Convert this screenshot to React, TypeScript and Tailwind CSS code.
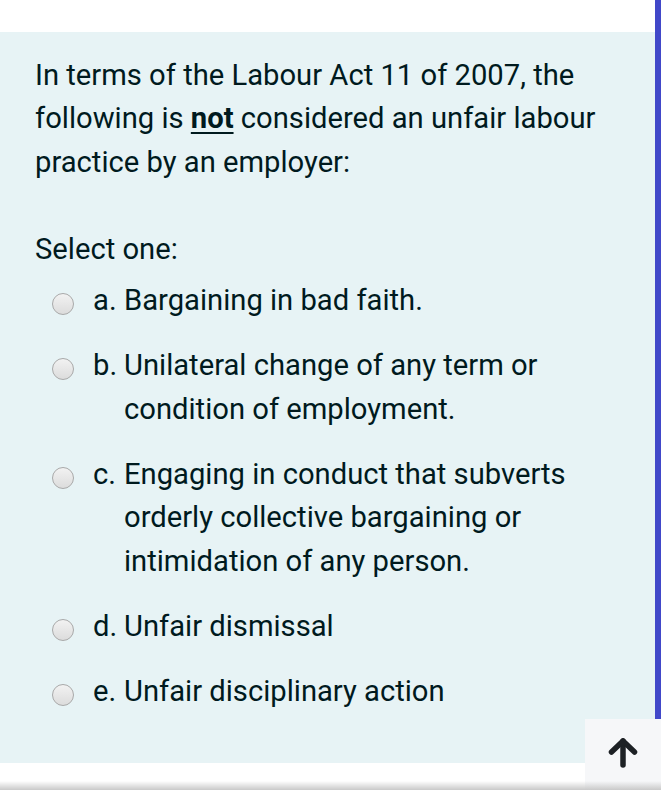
import { useState } from 'react';

const options = [
  { key: 'a.', text: 'Bargaining in bad faith.' },
  { key: 'b.', text: 'Unilateral change of any term or condition of employment.' },
  { key: 'c.', text: 'Engaging in conduct that subverts orderly collective bargaining or intimidation of any person.' },
  { key: 'd.', text: 'Unfair dismissal' },
  { key: 'e.', text: 'Unfair disciplinary action' },
];

const App = () => {
  const [selected, setSelected] = useState<string | null>(null);

  return (
    <div
      className="relative w-[661px] h-[790px] overflow-hidden bg-white flex text-[#001a1e]"
      style={{ fontFamily: 'Roboto, "Liberation Sans", sans-serif' }}
    >
      <div className="flex-1 flex flex-col">
        <div className="h-[32px]" />
        <div className="bg-[#e7f3f5] pl-[35px] pr-[30px] pt-[22px] pb-[49px] text-[29.2px] leading-[43.3px]">
          <p>
            In terms of the Labour Act 11 of 2007, the following is{' '}
            <strong className="font-bold underline underline-offset-[4px] decoration-2">not</strong> considered an unfair labour practice by an employer:
          </p>

          <p className="mt-[44px]">Select one:</p>

          <div className="mt-[8px] flex flex-col gap-[22px]">
            {options.map((opt) => (
              <label key={opt.key} className="flex items-start cursor-pointer" onClick={() => setSelected(opt.key)}>
                <span className="ml-[17px] mt-[14px] w-[22px] h-[22px] shrink-0 rounded-full border border-[#a9a9a9] bg-gradient-to-b from-[#f2f2f2] to-[#dcdcdc] flex items-center justify-center">
                  {selected === opt.key && <span className="w-[10px] h-[10px] rounded-full bg-[#333]" />}
                </span>
                <span className="ml-[19px] w-[31px] shrink-0">{opt.key}</span>
                <span>{opt.text}</span>
              </label>
            ))}
          </div>
        </div>
      </div>
      <div className="w-[6px] bg-[#4148c9]" />

      {/* back to top */}
      <button className="absolute right-0 bottom-0 w-[76px] h-[71px] bg-[#f6f7f9] flex justify-center pt-[18px]">
        <svg width="30" height="32" viewBox="0 0 30 32" fill="none" stroke="#1d2125" strokeWidth="5.5" strokeLinecap="round" strokeLinejoin="round">
          <path d="M15 4 L15 28" />
          <path d="M3.5 15 L15 4 L26.5 15" />
        </svg>
      </button>

      <div className="absolute left-0 right-0 bottom-0 h-[9px] bg-gradient-to-b from-transparent to-[#c9c9c9]" />
    </div>
  );
};

export default App;
